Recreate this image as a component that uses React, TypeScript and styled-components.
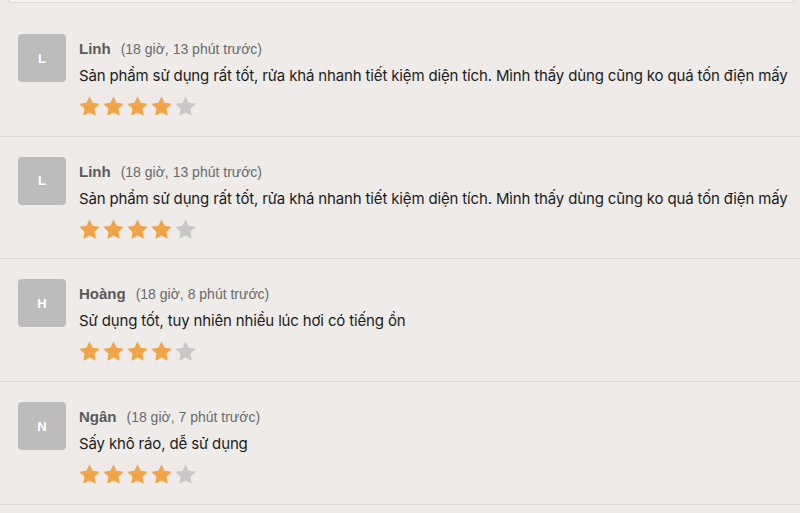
import styled, { createGlobalStyle } from 'styled-components';

const GlobalStyle = createGlobalStyle`
  html, body {
    margin: 0;
    padding: 0;
    background: #eeebe8;
  }
  body {
    font-family: 'Liberation Sans', Arial, sans-serif;
  }
`;

const Page = styled.div`
  width: 800px;
  height: 513px;
  overflow: hidden;
  background: #eeebe8;
`;

const TopCard = styled.div`
  height: 2px;
  margin: 0 5px 0 8px;
  background: #f4f3f1;
  border: 1px solid #dcd9d6;
  border-top: none;
  border-radius: 0 0 4px 4px;
`;

const List = styled.ul`
  list-style: none;
  margin: 11px 0 0;
  padding: 0;
`;

const Row = styled.li`
  display: flex;
  align-items: flex-start;
  gap: 13px;
  padding: 20px 0 19.7px 18px;
  border-bottom: 1px solid #dcd9d5;
`;

const Avatar = styled.div`
  flex: none;
  width: 48px;
  height: 48px;
  border-radius: 4px;
  background: #bdbcbb;
  color: #fff;
  font-family: 'Liberation Sans', Arial, sans-serif;
  font-weight: 700;
  font-size: 13px;
  display: flex;
  align-items: center;
  justify-content: center;
`;

const Body = styled.div`
  display: flex;
  flex-direction: column;
  min-width: 0;
`;

const Meta = styled.div`
  display: flex;
  align-items: baseline;
  gap: 10px;
  height: 23px;
  margin-top: 3px;
  line-height: 23px;
  white-space: nowrap;
`;

const Name = styled.span`
  font-family: 'Liberation Sans', Arial, sans-serif;
  font-weight: 700;
  font-size: 15px;
  color: #5a5a5a;
`;

const Time = styled.span`
  font-family: 'Liberation Sans', Arial, sans-serif;
  font-size: 14px;
  color: #6a6a6a;
`;

const Comment = styled.p`
  margin: 5px 0 0;
  font-family: Inter, 'Noto Sans', sans-serif;
  font-size: 15px;
  letter-spacing: -0.15px;
  line-height: 22px;
  color: #1c1c1c;
  white-space: nowrap;
`;

const Stars = styled.div`
  display: flex;
  gap: 3px;
  margin-top: 9px;
  height: 20px;
`;

const StarIcon = styled.svg<{ $on: boolean }>`
  width: 21px;
  height: 20px;
  fill: ${(p) => (p.$on ? '#f1a346' : '#c9c8c7')};
`;

function Star({ on }: { on: boolean }) {
  return (
    <StarIcon $on={on} viewBox="0 0 24 23">
      <path d="M12 0.6l3.55 7.3 8.05 1.15-5.85 5.65 1.4 8-7.15-3.8-7.15 3.8 1.4-8L0.4 9.05l8.05-1.15z" />
    </StarIcon>
  );
}

type Review = { initial: string; name: string; time: string; text: string; rating: number };

const reviews: Review[] = [
  {
    initial: 'L',
    name: 'Linh',
    time: '(18 giờ, 13 phút trước)',
    text: 'Sản phẩm sử dụng rất tốt, rửa khá nhanh tiết kiệm diện tích. Mình thấy dùng cũng ko quá tốn điện mấy',
    rating: 4,
  },
  {
    initial: 'L',
    name: 'Linh',
    time: '(18 giờ, 13 phút trước)',
    text: 'Sản phẩm sử dụng rất tốt, rửa khá nhanh tiết kiệm diện tích. Mình thấy dùng cũng ko quá tốn điện mấy',
    rating: 4,
  },
  {
    initial: 'H',
    name: 'Hoàng',
    time: '(18 giờ, 8 phút trước)',
    text: 'Sử dụng tốt, tuy nhiên nhiều lúc hơi có tiếng ồn',
    rating: 4,
  },
  {
    initial: 'N',
    name: 'Ngân',
    time: '(18 giờ, 7 phút trước)',
    text: 'Sấy khô ráo, dễ sử dụng',
    rating: 4,
  },
];

export default function App() {
  return (
    <Page>
      <GlobalStyle />
      <TopCard />
      <List>
        {reviews.map((r, i) => (
          <Row key={i}>
            <Avatar>{r.initial}</Avatar>
            <Body>
              <Meta>
                <Name>{r.name}</Name>
                <Time>{r.time}</Time>
              </Meta>
              <Comment>{r.text}</Comment>
              <Stars>
                {[1, 2, 3, 4, 5].map((n) => (
                  <Star key={n} on={n <= r.rating} />
                ))}
              </Stars>
            </Body>
          </Row>
        ))}
      </List>
    </Page>
  );
}
